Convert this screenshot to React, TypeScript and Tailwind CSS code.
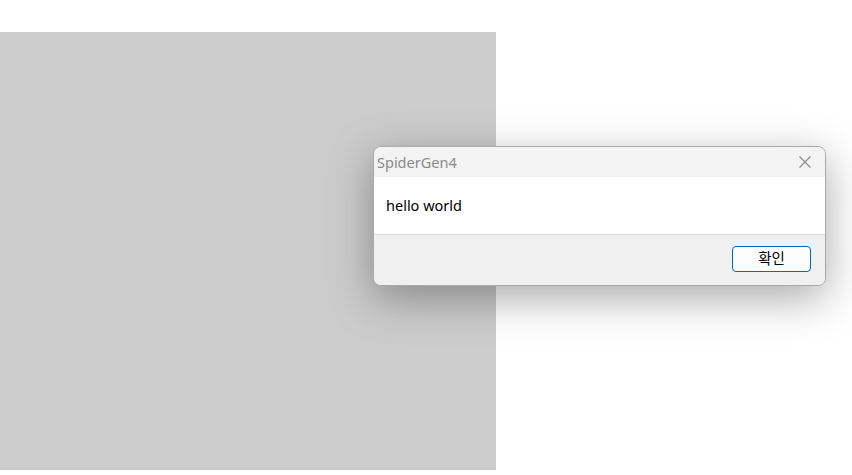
export default function App() {
  return (
    <div className="relative w-[852px] h-[475px] bg-white overflow-hidden" style={{ fontFamily: '"Segoe UI", "Noto Sans", "Noto Sans CJK KR", sans-serif' }}>
      <div className="pt-[32px]">
        <div className="w-[496px] h-[438px] bg-[#cccccc]" />
      </div>
      <div className="absolute left-[373px] top-[146px] w-[453px] h-[140px] rounded-[8px] border border-[#a9a9a9] bg-[#f3f3f3] shadow-[0_12px_44px_rgba(0,0,0,0.34)] flex flex-col overflow-hidden">
        <div className="h-[30px] flex items-center justify-between pl-[3px] pr-[13px] bg-[#f3f3f3]">
          <span className="text-[14.5px] text-[#8a8a8a] leading-none">SpiderGen4</span>
          <svg width="14" height="14" viewBox="0 0 14 14">
            <path d="M1.5 1.5 L12.5 12.5 M12.5 1.5 L1.5 12.5" stroke="#8a8a8a" strokeWidth="1.1" fill="none" />
          </svg>
        </div>
        <div className="h-[58px] bg-white flex items-center pl-[12px] border-b border-[#dcdcdc]">
          <span className="text-[14.5px] text-black">hello world</span>
        </div>
        <div className="flex-1 bg-[#f0f0f0] flex items-start justify-end pr-[14px] pt-[11px]">
          <button className="w-[79px] h-[26px] rounded-[4px] border border-[#0067c0] bg-[#fdfdfd] text-[14.5px] text-black flex items-center justify-center">
            확인
          </button>
        </div>
      </div>
    </div>
  );
}
